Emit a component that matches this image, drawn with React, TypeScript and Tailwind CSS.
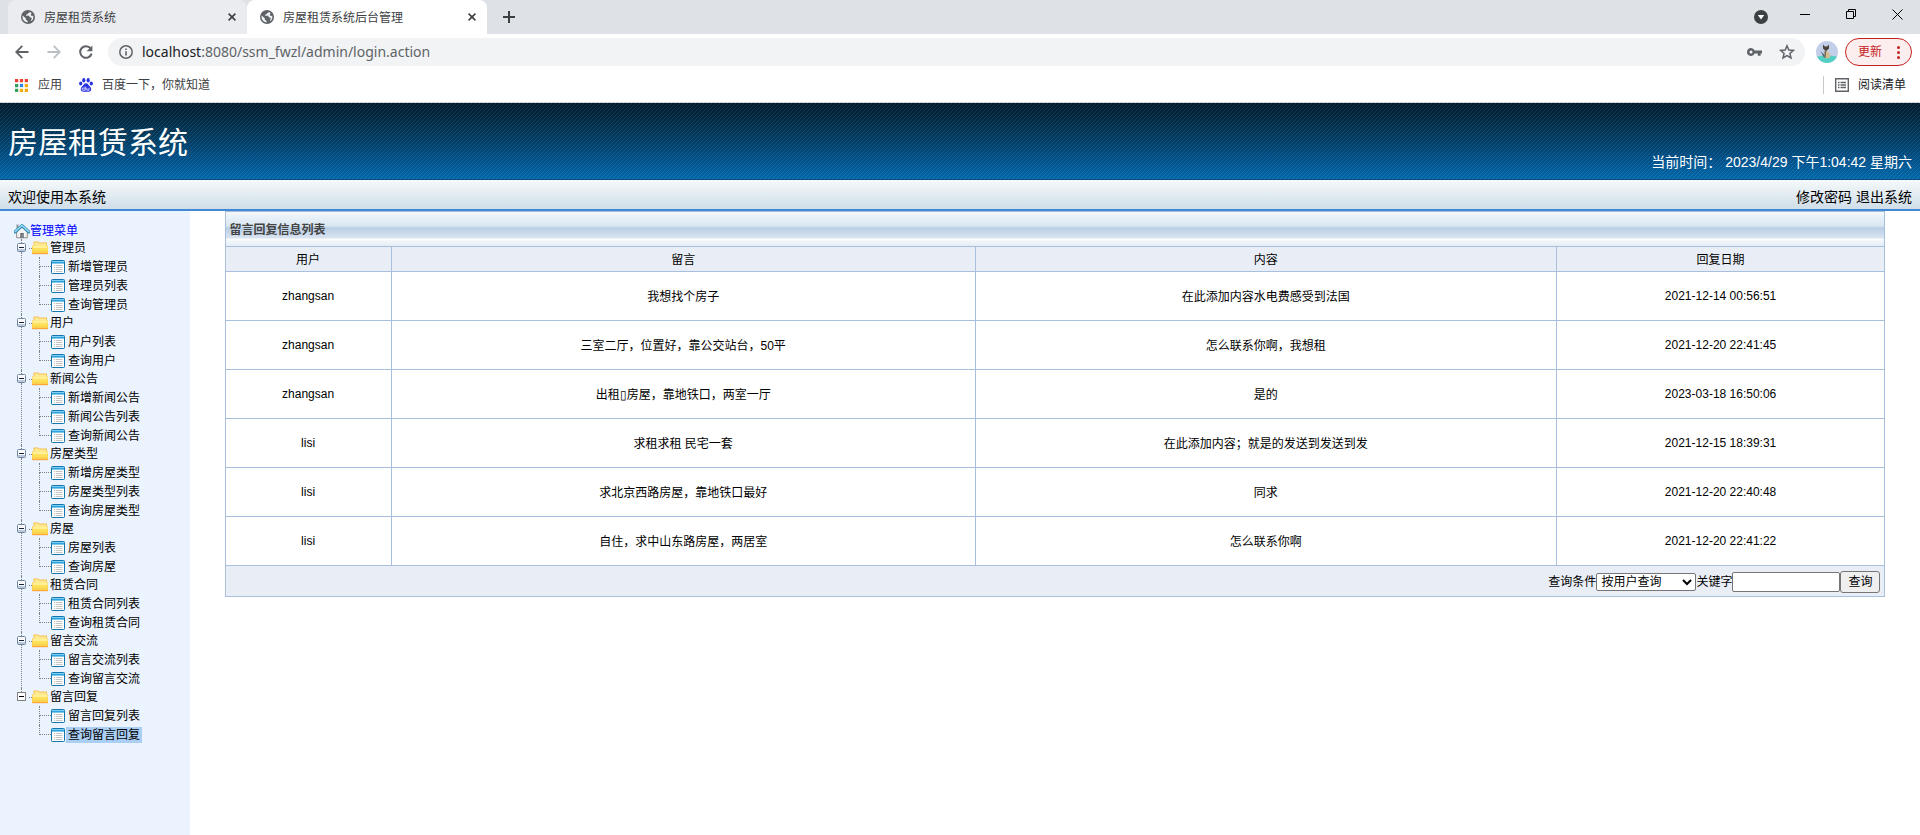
import {type CSSProperties, useState} from 'react';

const HATCH_STYLE: CSSProperties = {
  backgroundImage:
    'linear-gradient(135deg, transparent 42%, rgba(255,255,255,0.1) 42%, rgba(255,255,255,0.1) 58%, transparent 58%), linear-gradient(#001a2c, #003a5e 45%, #00508a 75%, #0067a8)',
  backgroundSize: '4px 4px, 100% 100%'
};

const TITLE_BAR_STYLE: CSSProperties = {
  backgroundImage: 'linear-gradient(#fbfdfe 0px, #edf4fa 2px, #d9e6ef 14px, #b8cde5 15px, #dbe5f1 26px, #ffffff 26px, #f3f7fb 28px, #e0eaf3 35px)'
};

interface MenuGroup {
  title: string;
  items: string[];
}

const MENU: MenuGroup[] = [
  {title: '管理员', items: ['新增管理员', '管理员列表', '查询管理员']},
  {title: '用户', items: ['用户列表', '查询用户']},
  {title: '新闻公告', items: ['新增新闻公告', '新闻公告列表', '查询新闻公告']},
  {title: '房屋类型', items: ['新增房屋类型', '房屋类型列表', '查询房屋类型']},
  {title: '房屋', items: ['房屋列表', '查询房屋']},
  {title: '租赁合同', items: ['租赁合同列表', '查询租赁合同']},
  {title: '留言交流', items: ['留言交流列表', '查询留言交流']},
  {title: '留言回复', items: ['留言回复列表', '查询留言回复']}
];

const REPLIES = [
  {user: 'zhangsan', message: '我想找个房子', content: '在此添加内容水电费感受到法国', date: '2021-12-14 00:56:51'},
  {user: 'zhangsan', message: '三室二厅，位置好，靠公交站台，50平', content: '怎么联系你啊，我想租', date: '2021-12-20 22:41:45'},
  {user: 'zhangsan', message: '出租▯房屋，靠地铁口，两室一厅', content: '是的', date: '2023-03-18 16:50:06'},
  {user: 'lisi', message: '求租求租 民宅一套', content: '在此添加内容；就是的发送到发送到发', date: '2021-12-15 18:39:31'},
  {user: 'lisi', message: '求北京西路房屋，靠地铁口最好', content: '同求', date: '2021-12-20 22:40:48'},
  {user: 'lisi', message: '自住，求中山东路房屋，两居室', content: '怎么联系你啊', date: '2021-12-20 22:41:22'}
];

function GlobeIcon() {
  return (
    <svg className="h-[14px] w-[14px] shrink-0" viewBox="0 0 14 14">
      <circle cx="7" cy="7" r="7" fill="#5f6368" />
      <path d="M1.6 5.6 4.8 8.3V9.6L6.6 11v1.5A5.6 5.6 0 0 1 1.6 5.6ZM8.9 1.8c-.2.9-.9 1.3-1.7 1.2L6.3 4.4l-1.2.1v1.2h3l.8 1.7h1.4l.5 1.2-.9 1.9.6.6a5.6 5.6 0 0 0 1.8-5.4l-1.6.3-1-1.2.9-1.4A5.6 5.6 0 0 0 8.9 1.8Z" fill="#eef0f2" />
    </svg>
  );
}

function CloseIcon() {
  return (
    <svg className="h-[8px] w-[8px]" viewBox="0 0 8 8" stroke="#3c4043" strokeWidth="1.6">
      <path d="M.6.6l6.8 6.8M7.4.6.6 7.4" />
    </svg>
  );
}

function HomeIcon() {
  return (
    <svg className="h-[16px] w-[16px] shrink-0" viewBox="0 0 16 16">
      <path d="M2.5 1.5h2v5h-2z" fill="#8d9499" />
      <path d="M2.7 8.5 8 3.6l5.3 4.9v6.3H2.7z" fill="#f4f4f4" stroke="#8b8b8b" />
      <path d="M6.3 10h3.4v5H6.3z" fill="#5a5f63" />
      <path d="M7.3 10.7h2v4.3h-2z" fill="#84898d" />
      <path d="M1.2 8.9 8 2.6l6.8 6.3" fill="none" stroke="#1f7fa8" strokeWidth="3.2" strokeLinecap="round" strokeLinejoin="round" />
      <path d="M1.2 8.7 8 2.4l6.8 6.3" fill="none" stroke="#8fd4f2" strokeWidth="1.7" strokeLinecap="round" strokeLinejoin="round" />
    </svg>
  );
}

function FolderIcon() {
  return (
    <svg className="h-[14px] w-[16px] shrink-0" viewBox="0 0 16 14">
      <path d="M1.5.5h4.7l1 1H15V7H1.5z" fill="#f8c050" />
      <path d="M2.5 1.5h3.2l1 1H14V7H2.5z" fill="#fdeb95" />
      <path d="M0 4.5h16V13H0z" fill="#fcd050" />
      <path d="M.8 4.5h14.7v3H.8z" fill="#fff09a" />
      <path d="M.8 7.5h14.7V10H.8z" fill="#fee055" />
      <path d="M0 12h16v1.2H0z" fill="#f9a83c" />
    </svg>
  );
}

function PageIcon() {
  return (
    <svg className="h-[14px] w-[14px] shrink-0" viewBox="0 0 14 14">
      <rect x=".5" y=".5" width="13" height="13" rx=".8" fill="#fff" stroke="#1576ad" />
      <path d="M1 1h12v2.6H1z" fill="#2ea3de" />
      <path d="M1 1h12v1H1z" fill="#7fd0f4" />
      <path d="M3 5.5h1.2M5 5.5h6.5M3 7.5h1.2M5 7.5h6.5M3 9.5h1.2M5 9.5h6.5M3 11.5h1.2M5 11.5h6.5" stroke="#c4c4c4" />
    </svg>
  );
}

function ToggleIcon({plain}: {plain: boolean}) {
  return plain ? (
    <svg className="h-[9px] w-[9px]" viewBox="0 0 9 9">
      <rect x=".5" y=".5" width="8" height="8" fill="#fff" stroke="#808080" />
      <path d="M2 4.5h5" stroke="#000" />
    </svg>
  ) : (
    <svg className="h-[9px] w-[9px]" viewBox="0 0 9 9">
      <rect x=".5" y=".5" width="8" height="8" rx="1" fill="#fdfdfd" stroke="#6f84a3" />
      <path d="M1 6h7v2H1z" fill="#bcc9dc" />
      <path d="M2 4.5h5" stroke="#14233d" />
    </svg>
  );
}

function BrowserTab({title, active}: {title: string; active?: boolean}) {
  return (
    <div className={`flex h-[34px] items-center rounded-t-lg pr-[11px] pl-[13px] text-[12px] text-[#3c4043] ${active ? 'w-[240px] bg-white' : 'w-[239px] bg-[#ebecf0]'}`}>
      <GlobeIcon />
      <span className="ml-[9px] flex-1 truncate pt-px">{title}</span>
      <button type="button" aria-label="关闭标签页">
        <CloseIcon />
      </button>
    </div>
  );
}

function TabStrip() {
  return (
    <div className="flex h-[34px] items-center bg-[#dee1e6] pl-2">
      <BrowserTab title="房屋租赁系统" />
      <BrowserTab title="房屋租赁系统后台管理" active />
      <button type="button" aria-label="新标签页" className="ml-4">
        <svg className="h-[12px] w-[12px]" viewBox="0 0 12 12" stroke="#3c4043" strokeWidth="2">
          <path d="M6 0v12M0 6h12" />
        </svg>
      </button>
      <div className="ml-auto flex items-center pr-[17px]">
        <svg className="mr-8 h-[14px] w-[14px]" viewBox="0 0 14 14">
          <circle cx="7" cy="7" r="7" fill="#3c4043" />
          <path d="M3.8 5h6.4L7 9.6z" fill="#fff" />
        </svg>
        <div className="flex items-center gap-[35px] pb-[6px]">
          <button type="button" aria-label="最小化">
            <svg className="h-[11px] w-[11px]" viewBox="0 0 11 11" stroke="#000">
              <path d="M0 5.5h10" />
            </svg>
          </button>
          <button type="button" aria-label="还原">
            <svg className="h-[11px] w-[11px]" viewBox="0 0 11 11" fill="none" stroke="#000">
              <path d="M.5 2.5h7v7h-7zM2.5 2.5v-2h7v7h-2" />
            </svg>
          </button>
          <button type="button" aria-label="关闭">
            <svg className="h-[11px] w-[11px]" viewBox="0 0 11 11" stroke="#000">
              <path d="M.5.5l10 10M10.5.5l-10 10" />
            </svg>
          </button>
        </div>
      </div>
    </div>
  );
}

function AddressBar() {
  return (
    <div className="flex h-[36px] items-center bg-white pr-2 pl-[15px]">
      <button type="button" aria-label="后退">
        <svg className="h-[14px] w-[14px]" viewBox="0 0 14 14" fill="none" stroke="#5f6368" strokeWidth="1.8">
          <path d="M13.5 7H1.5M7.3.8 1.2 7l6.1 6.2" />
        </svg>
      </button>
      <button type="button" aria-label="前进" className="ml-[18px]">
        <svg className="h-[14px] w-[14px]" viewBox="0 0 14 14" fill="none" stroke="#bdc0c3" strokeWidth="1.8">
          <path d="M.5 7h12M6.7.8 12.8 7l-6.1 6.2" />
        </svg>
      </button>
      <button type="button" aria-label="重新加载" className="ml-[18px]">
        <svg className="h-[14px] w-[14px]" viewBox="0 0 14 14" fill="none">
          <path d="M11.6 3.4A5.8 5.8 0 1 0 12.6 8.6" stroke="#5f6368" strokeWidth="2" />
          <path d="M13.4.4v5.8H7.6z" fill="#5f6368" />
        </svg>
      </button>
      <div className="ml-[15px] flex h-[28px] flex-1 items-center rounded-full bg-[#f1f3f4] pr-[10px] pl-[11px]">
        <svg className="h-[14px] w-[14px] shrink-0" viewBox="0 0 14 14">
          <circle cx="7" cy="7" r="6.2" fill="none" stroke="#5f6368" strokeWidth="1.5" />
          <path d="M6.2 6.2h1.6v4.3H6.2zM6.2 3.5h1.6v1.6H6.2z" fill="#5f6368" />
        </svg>
        <span className="ml-[9px] flex-1 pb-px font-['Noto_Sans',sans-serif] text-[14px] text-[#5f6368]">
          <span className="text-[#202124]">localhost</span>:8080/ssm_fwzl/admin/login.action
        </span>
        <svg className="mr-[17px] h-[14px] w-[15px]" viewBox="0 0 15 14">
          <path fillRule="evenodd" d="M4 3a4 4 0 0 1 3.7 2.6H15v3h-1.4v2.2h-2.8V8.6H7.7A4 4 0 1 1 4 3Zm0 2.6a1.5 1.5 0 1 0 0 3 1.5 1.5 0 0 0 0-3Z" fill="#5f6368" />
        </svg>
        <svg className="h-[16px] w-[16px]" viewBox="0 0 16 16" fill="none" stroke="#5f6368" strokeWidth="1.5">
          <path d="M8 1.8l1.8 4.2 4.6.4-3.5 3 1.1 4.5L8 11.5l-4 2.4 1.1-4.5-3.5-3 4.6-.4z" />
        </svg>
      </div>
      <svg className="ml-[11px] h-[22px] w-[22px]" viewBox="0 0 22 22">
        <circle cx="11" cy="11" r="11" fill="#c3cfe9" />
        <path d="M1 15.5c6-1.5 14-1.5 20 0A11 11 0 0 1 1 15.5Z" fill="#52d0c4" />
        <path d="M4.5 10 9 14.5l-1 2z" fill="#4a5a66" />
        <path d="M9 9.5c4 1 6 3.5 5.2 7.3L9 17.5z" fill="#d3bd92" />
        <path d="M7 3.5 8.8 5.5h2.4L13 3.5v4l-3 2.8-3-2.8z" fill="#4b4038" />
        <path d="M8.5 10h1.7L9.6 17H8.5z" fill="#7a6651" />
      </svg>
      <button type="button" className="ml-[7px] flex h-[28px] w-[67px] items-center justify-between rounded-full border border-[#c5221f] bg-[#fceeee] pr-[11px] pl-3 text-[12px] text-[#c5221f]">
        更新
        <svg className="h-[13px] w-[3px]" viewBox="0 0 3 13" fill="#c5221f">
          <circle cx="1.5" cy="1.5" r="1.5" />
          <circle cx="1.5" cy="6.5" r="1.5" />
          <circle cx="1.5" cy="11.5" r="1.5" />
        </svg>
      </button>
    </div>
  );
}

function BookmarkBar() {
  return (
    <div className="flex h-[33px] items-center border-b border-[#d5d7da] bg-white pr-[14px] pb-[2px] pl-[15px] text-[12px] text-[#3c4043]">
      <a href="#apps" className="flex items-center gap-[10px]">
        <svg className="h-[13px] w-[13px]" viewBox="0 0 12 12">
          <path d="M0 0h3v3H0zM4.5 0h3v3h-3zM9 0h3v3H9z" fill="#ea4335" />
          <path d="M0 4.5h3v3H0zM0 9h3v3H0z" fill="#34a060" />
          <path d="M4.5 4.5h3v3h-3z" fill="#2f86f0" />
          <path d="M9 4.5h3v3H9zM4.5 9h3v3h-3zM9 9h3v3H9z" fill="#f5ab0c" />
        </svg>
        应用
      </a>
      <a href="#baidu" className="ml-[17px] flex items-center gap-[9px]">
        <svg className="h-[14px] w-[14px]" viewBox="0 0 14 14" fill="#2932e1">
          <ellipse cx="4.8" cy="2.2" rx="1.6" ry="2.2" />
          <ellipse cx="9.2" cy="2.2" rx="1.6" ry="2.2" />
          <ellipse cx="1.7" cy="5.5" rx="1.6" ry="2" />
          <ellipse cx="12.3" cy="5.5" rx="1.6" ry="2" />
          <path d="M7 5.2c2 0 2.5 2 4 3.4 1.7 1.5 1.9 5.2-1.3 5.2H4.3C1.1 13.8 1.3 10.1 3 8.6 4.5 7.2 5 5.2 7 5.2Z" />
          <path d="M6.2 8.5v3.7H4.5a1.1 1.1 0 1 1 0-2.1h1.7M7.8 9.8v2.4H10V9.8" fill="none" stroke="#fff" strokeWidth=".8" />
        </svg>
        百度一下，你就知道
      </a>
      <a href="#reading" className="ml-auto flex items-center gap-[9px] border-l border-[#c6c8cb] pl-[11px] text-[#202124]">
        <svg className="h-[14px] w-[14px]" viewBox="0 0 14 14" fill="none" stroke="#5f6368" strokeWidth="1.4">
          <path d="M.7.7h12.6v12.6H.7zM3 4.5h1.5M5.5 4.5H11M3 7h1.5M5.5 7H11M3 9.5h1.5M5.5 9.5H11" />
        </svg>
        阅读清单
      </a>
    </div>
  );
}

function SiteHeader() {
  return (
    <header className="text-[14px]">
      <div className="flex h-[77px] items-end justify-between border-b border-[#0d4a80] px-2 text-white" style={HATCH_STYLE}>
        <h1 className="self-center pt-[3px] text-[30px]">房屋租赁系统</h1>
        <p className="pb-[6px]">当前时间： 2023/4/29 下午1:04:42 星期六</p>
      </div>
      <div className="flex h-[31px] items-center justify-between border-b-2 border-[#4189d6] bg-linear-to-b from-[#f5f9fa] to-[#d0dee9] px-2 pt-[6px] text-black">
        <span>欢迎使用本系统</span>
        <nav className="flex gap-1">
          <a href="#password">修改密码</a>
          <a href="#logout">退出系统</a>
        </nav>
      </div>
    </header>
  );
}

function Sidebar() {
  const [current, setCurrent] = useState('查询留言回复');

  return (
    <nav className="w-[190px] shrink-0 bg-[#ebf3ff] pt-[11px] pl-[14px] leading-none">
      <a href="#menu" className="flex h-[17px] items-center text-[#0000ff]">
        <HomeIcon />
        管理菜单
      </a>
      <ul>
        {MENU.map((group, index) => {
          const isLast = index === MENU.length - 1;
          return (
            <li key={group.title} className="flex">
              <div className="flex w-[15px] shrink-0 flex-col items-center">
                <span className="h-[4px] border-l border-dotted border-[#808080]" />
                <ToggleIcon plain={isLast} />
                {!isLast && <span className="flex-1 border-l border-dotted border-[#808080]" />}
              </div>
              <div>
                <div className="flex h-[18px] items-center">
                  <span className="w-[3px] border-t border-dotted border-[#808080]" />
                  <FolderIcon />
                  <span className="ml-[2px]">{group.title}</span>
                </div>
                <ul className="pl-[10px]">
                  {group.items.map((item, i) => (
                    <li key={item} className="flex h-[19px] items-center">
                      <span className="flex h-full flex-col">
                        <span className="h-[10px] w-[12px] border-b border-l border-dotted border-[#808080]" />
                        {i < group.items.length - 1 && <span className="flex-1 border-l border-dotted border-[#808080]" />}
                      </span>
                      <PageIcon />
                      <a
                        href="#item"
                        onClick={() => setCurrent(item)}
                        className={`ml-[1px] px-[2px] py-[2px] ${current === item ? 'bg-[#abcef5]' : ''}`}
                      >
                        {item}
                      </a>
                    </li>
                  ))}
                </ul>
              </div>
            </li>
          );
        })}
      </ul>
    </nav>
  );
}

const CELL = 'border border-[#a8c0de] text-center font-normal';

function ReplyTable() {
  return (
    <main className="flex-1">
      <table className="mx-auto w-[96%] table-fixed border-collapse">
        <colgroup>
          <col className="w-[10%]" />
          <col className="w-[35.2%]" />
          <col className="w-[35%]" />
          <col className="w-[19.8%]" />
        </colgroup>
        <thead>
          <tr className="h-[35px]">
            <th colSpan={4} className="border border-[#a8c0de] pt-[2px] pl-1 text-left font-bold text-[#444444]" style={TITLE_BAR_STYLE}>
              留言回复信息列表
            </th>
          </tr>
          <tr className="h-[25px] bg-[#e9eef6]">
            <th className={`${CELL} pt-[2px]`}>用户</th>
            <th className={`${CELL} pt-[2px]`}>留言</th>
            <th className={`${CELL} pt-[2px]`}>内容</th>
            <th className={`${CELL} pt-[2px]`}>回复日期</th>
          </tr>
        </thead>
        <tbody>
          {REPLIES.map((reply) => (
            <tr key={reply.date} className="h-[49px]">
              <td className={CELL}>{reply.user}</td>
              <td className={`${CELL} pt-[2px]`}>{reply.message}</td>
              <td className={`${CELL} pt-[2px]`}>{reply.content}</td>
              <td className={CELL}>{reply.date}</td>
            </tr>
          ))}
        </tbody>
        <tfoot>
          <tr className="h-[31px] bg-[#e9eef6]">
            <td colSpan={4} className="border border-[#a8c0de] pt-[2px] pr-1">
              <form className="flex items-center justify-end" onSubmit={(e) => e.preventDefault()}>
                <label htmlFor="cond">查询条件</label>
                <select id="cond" className="h-[18px] w-[100px] rounded-[2px] border border-[#767676] bg-white">
                  <option>按用户查询</option>
                  <option>按留言查询</option>
                </select>
                <label htmlFor="keyword">关键字</label>
                <input id="keyword" type="text" className="h-[20px] w-[108px] rounded-[2px] border border-[#767676] bg-white px-1" />
                <button type="submit" className="h-[22px] w-[40px] rounded-[3px] border border-[#767676] bg-[#efefef]">
                  查询
                </button>
              </form>
            </td>
          </tr>
        </tfoot>
      </table>
    </main>
  );
}

export default function App() {
  return (
    <div className="flex min-h-screen flex-col bg-white font-['Liberation_Sans','Noto_Sans_CJK_SC',sans-serif] text-[12px] text-black">
      <TabStrip />
      <AddressBar />
      <BookmarkBar />
      <SiteHeader />
      <div className="flex flex-1">
        <Sidebar />
        <ReplyTable />
      </div>
    </div>
  );
}
